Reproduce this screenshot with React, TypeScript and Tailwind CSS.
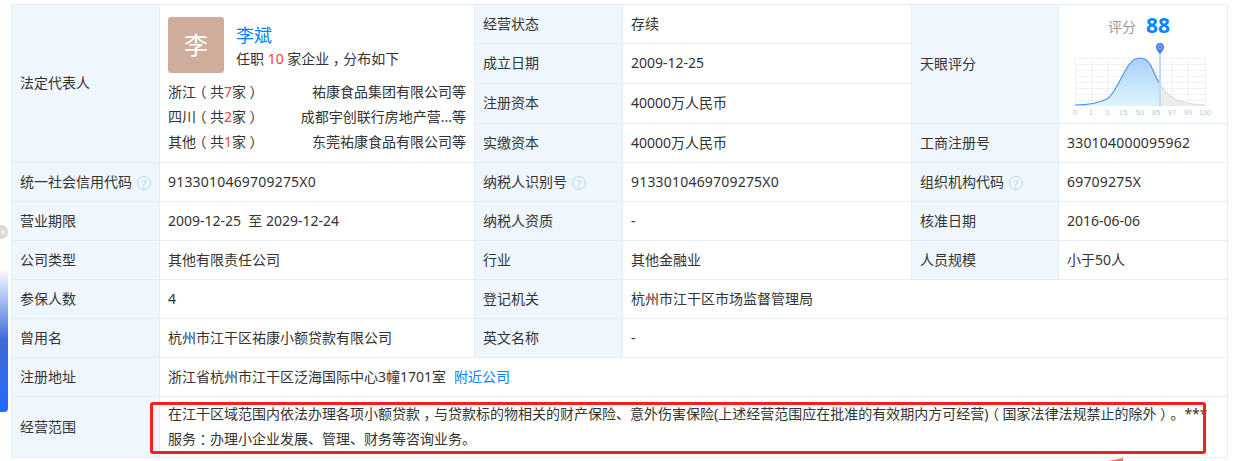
const TH = 'border border-[#e4eef6] bg-[#eff6fd] px-2 pb-[2px] text-left font-normal align-middle';
const TD = 'border border-[#e4eef6] px-2 pb-[2px] align-middle';

// full-width punctuation sits centred in its box in the original font
function Mid({ c }: { c: string }) {
  return <span className="px-[3.5px] [font-feature-settings:'halt']">{c}</span>;
}

function Help() {
  return (
    <span className="ml-[5px] inline-flex h-[14px] w-[14px] items-center justify-center rounded-full border border-[#b9d4ec] align-[-1px] text-[11px] leading-none text-[#b9d4ec]">
      ?
    </span>
  );
}

function Region({ name, count, company }: { name: string; count: number; company: string }) {
  return (
    <div className="flex h-[25px] items-center justify-between">
      <span>
        {name}
        <Mid c="（" />共<span className="text-[#ff3b3b]">{count}</span>家<Mid c="）" />
      </span>
      <span>{company}</span>
    </div>
  );
}

function ScoreChart() {
  const labels = ['0', '1', '3', '15', '50', '85', '97', '99', '100'];
  const cols = [16, 32, 48, 64, 81, 97, 113, 129, 146];
  return (
    <svg width="168" height="80" viewBox="0 0 168 80" className="block">
      <defs>
        <linearGradient id="bell" x1="0" y1="0" x2="0" y2="1">
          <stop offset="0" stopColor="#a9d0f8" />
          <stop offset="1" stopColor="#dff5fd" />
        </linearGradient>
      </defs>
      {cols.map((x) => (
        <line key={x} x1={x + 0.5} y1="19" x2={x + 0.5} y2="67" stroke="#f0f1f4" />
      ))}
      {[19.5, 25.5, 31.5, 37.5, 43.5, 49.5, 55.5, 61.5].map((y) => (
        <line key={y} x1="16" y1={y} x2="146" y2={y} stroke="#f0f1f4" />
      ))}
      <path d="M101 45 C105 52 110 57 116 60 C125 64 135 66 146 66 L146 67 L101 67 Z" fill="#ececee" />
      <path d="M101 45 C105 52 110 57 116 60 C125 64 135 66 146 66" fill="none" stroke="#dcdcdf" strokeWidth="1.2" />
      <path d="M16 66 C30 66 40 64 48 60 C55 56 61 40 69 27 C73 21 77 19 81 19 C86 19 89 21 92 27 C95 33 97 39 101 45 L101 67 L16 67 Z" fill="url(#bell)" />
      <path d="M16 66 C30 66 40 64 48 60 C55 56 61 40 69 27 C73 21 77 19 81 19 C86 19 89 21 92 27 C95 33 97 39 101 45" fill="none" stroke="#4c96f2" strokeWidth="1.2" />
      <rect x="100" y="12" width="2" height="55" fill="#c4d8f8" />
      <path d="M101 15 C98.5 12 97 10.5 97 8 A4 4 0 0 1 105 8 C105 10.5 103.5 12 101 15 Z" fill="#3f7cf0" />
      <circle cx="101" cy="8" r="2" fill="none" stroke="#a9c8fa" strokeWidth="0.8" />
      {labels.map((label, i) => (
        <text key={label} x={cols[i]} y="76" textAnchor="middle" fontSize="7.5" fill="#b5c9e8" fontFamily="Liberation Sans">
          {label}
        </text>
      ))}
    </svg>
  );
}

export default function App() {
  return (
    <div className="relative h-[461px] w-[1234px] overflow-hidden bg-white font-['Noto_Sans','Noto_Sans_CJK_SC',sans-serif] text-[14px] text-[#333] [text-spacing-trim:space-all]">
      <div className="px-[11px] pt-1">
        <table className="relative w-[1216px] table-fixed border-collapse">
          <colgroup>
            <col className="w-[148px]" />
            <col className="w-[315px]" />
            <col className="w-[148px]" />
            <col className="w-[289px]" />
            <col className="w-[147px]" />
            <col className="w-[169px]" />
          </colgroup>
          <tbody>
            <tr className="h-[39px]">
              <th rowSpan={4} className={TH}>法定代表人</th>
              <td rowSpan={4} className="border border-[#e4eef6] px-2 pt-[12px] align-top">
                <div className="flex">
                  <div className="flex h-[56px] w-[56px] items-center justify-center rounded-[3px] bg-[#cfac9c] text-[24px] text-white">李</div>
                  <div className="ml-3">
                    <div className="mt-[6px] text-[18px] leading-[24px] text-[#0084ff]">李斌</div>
                    <div className="mt-[2px] leading-[20px]">
                      任职 <span className="text-[#ff3b3b]">10</span> 家企业<Mid c="，" />分布如下
                    </div>
                  </div>
                </div>
                <div className="mt-[6px]">
                  <Region name="浙江" count={7} company="祐康食品集团有限公司等" />
                  <Region name="四川" count={2} company="成都宇创联行房地产营...等" />
                  <Region name="其他" count={1} company="东莞祐康食品有限公司等" />
                </div>
              </td>
              <th className={TH}>经营状态</th>
              <td className={TD}>存续</td>
              <th rowSpan={3} className={TH}>天眼评分</th>
              <td rowSpan={3} className="border border-[#e4eef6] align-top">
                <div className="mt-[8px] flex h-[26px] items-center justify-center gap-[10px] pr-[8px]">
                  <span className="text-[#999]">评分</span>
                  <span className="text-[21px] font-bold text-[#0084ff]">88</span>
                </div>
                <ScoreChart />
              </td>
            </tr>
            <tr className="h-[40px]">
              <th className={TH}>成立日期</th>
              <td className={TD}>2009-12-25</td>
            </tr>
            <tr className="h-[40px]">
              <th className={TH}>注册资本</th>
              <td className={TD}>40000万人民币</td>
            </tr>
            <tr className="h-[39px]">
              <th className={TH}>实缴资本</th>
              <td className={TD}>40000万人民币</td>
              <th className={TH}>工商注册号</th>
              <td className={`${TD} tracking-[0.2px]`}>330104000095962</td>
            </tr>
            <tr className="h-[39px]">
              <th className={TH}>统一社会信用代码<Help /></th>
              <td className={`${TD} tracking-[0.2px]`}>9133010469709275X0</td>
              <th className={TH}>纳税人识别号<Help /></th>
              <td className={`${TD} tracking-[0.2px]`}>9133010469709275X0</td>
              <th className={TH}>组织机构代码<Help /></th>
              <td className={`${TD} tracking-[0.2px]`}>69709275X</td>
            </tr>
            <tr className="h-[39px]">
              <th className={TH}>营业期限</th>
              <td className={TD}>2009-12-25&nbsp; 至 2029-12-24</td>
              <th className={TH}>纳税人资质</th>
              <td className={TD}>-</td>
              <th className={TH}>核准日期</th>
              <td className={TD}>2016-06-06</td>
            </tr>
            <tr className="h-[39px]">
              <th className={TH}>公司类型</th>
              <td className={TD}>其他有限责任公司</td>
              <th className={TH}>行业</th>
              <td className={TD}>其他金融业</td>
              <th className={TH}>人员规模</th>
              <td className={TD}>小于50人</td>
            </tr>
            <tr className="h-[39px]">
              <th className={TH}>参保人数</th>
              <td className={TD}>4</td>
              <th className={TH}>登记机关</th>
              <td colSpan={3} className={TD}>杭州市江干区市场监督管理局</td>
            </tr>
            <tr className="h-[39px]">
              <th className={TH}>曾用名</th>
              <td className={TD}>杭州市江干区祐康小额贷款有限公司</td>
              <th className={TH}>英文名称</th>
              <td colSpan={3} className={TD}>-</td>
            </tr>
            <tr className="h-[39px]">
              <th className={TH}>注册地址</th>
              <td colSpan={5} className={TD}>
                浙江省杭州市江干区泛海国际中心3幢1701室
                <span className="ml-2 text-[#0084ff]">附近公司</span>
              </td>
            </tr>
            <tr className="h-[61px]">
              <th className={TH}>经营范围</th>
              <td colSpan={5} className={`${TD} leading-[25px]`}>
                <div className="whitespace-nowrap">
                  在江干区域范围内依法办理各项小额贷款<Mid c="，" />与贷款标的物相关的财产保险、意外伤害保险(上述经营范围应在批准的有效期内方可经营)<Mid c="（" />国家法律法规禁止的除外<Mid c="）" />。***
                </div>
                <div>
                  服务<Mid c="：" />办理小企业发展、管理、财务等咨询业务。
                </div>
              </td>
            </tr>
          </tbody>
        </table>
      </div>
      {/* annotations and page chrome over the table */}
      <div className="absolute top-[402px] left-[150px] h-[52px] w-[1056px] rounded-[3px] border-[3px] border-[#f5201c]" />
      <div className="absolute top-[225px] left-[-6px] flex h-[14px] w-[14px] items-center justify-end rounded-full bg-[#d8d8d8] pr-[2px] text-[10px] leading-none text-white">×</div>
      <div className="absolute top-[268px] left-0 h-[144px] w-[8px] rounded-br-[4px] bg-gradient-to-b from-white via-[#3f6ad8] to-[#1f6bff]" />
      <div className="absolute top-[458px] left-[1108px] h-0 w-0 border-b-[3px] border-l-[15px] border-b-[#f47b4f] border-l-transparent" />
    </div>
  );
}
